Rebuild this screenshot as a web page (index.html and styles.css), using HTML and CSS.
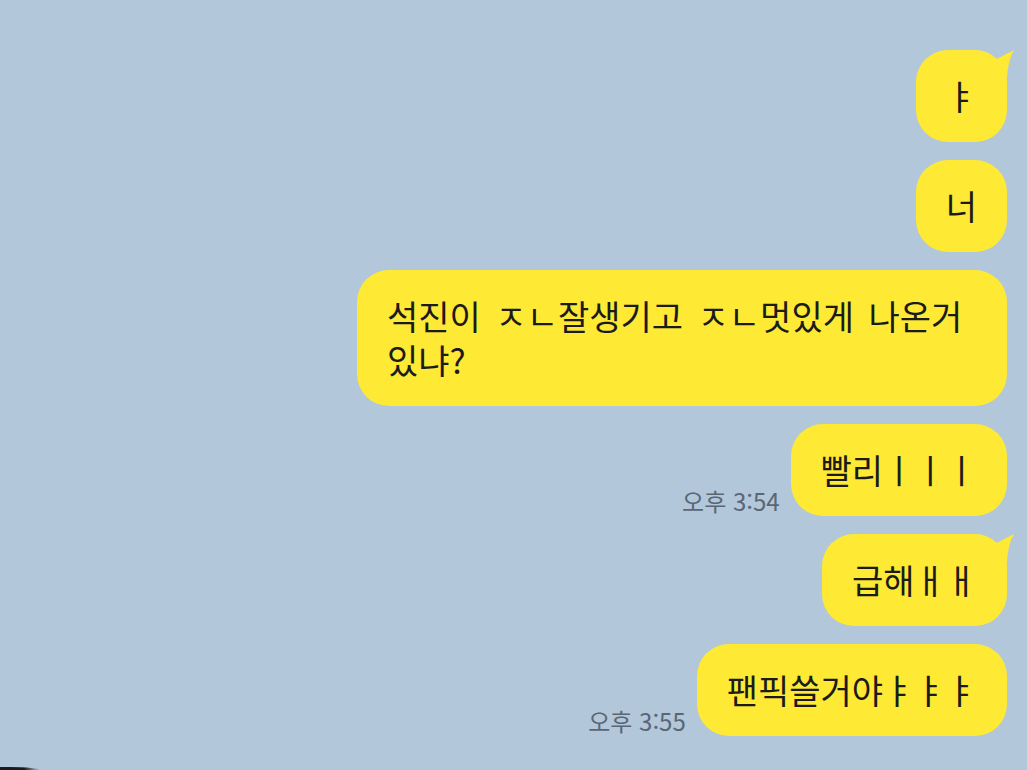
FILE: index.html
```html
<!DOCTYPE html>
<html lang="ko">
<head>
  <meta charset="UTF-8">
  <meta name="viewport" content="width=device-width, initial-scale=1.0">
  <title>채팅</title>
  <link rel="stylesheet" href="styles.css">
</head>
<body>
  <div class="chat">
    <div class="row">
      <div class="bubble first">ㅑ
        <svg class="tail" viewBox="0 0 40 30" width="40" height="30"><path d="M18 11 Q29 5 39 0 Q33 10 32 28 L18 28 Z"/></svg>
      </div>
    </div>
    <div class="row">
      <div class="bubble">너</div>
    </div>
    <div class="row">
      <div class="bubble">석진이 ㅈㄴ잘생기고 ㅈㄴ멋있게 나온거 있냐?</div>
    </div>
    <div class="row">
      <span class="time">오후 3:54</span>
      <div class="bubble">빨리ㅣㅣㅣ</div>
    </div>
    <div class="row">
      <div class="bubble first">급해ㅐㅐ
        <svg class="tail" viewBox="0 0 40 30" width="40" height="30"><path d="M18 11 Q29 5 39 0 Q33 10 32 28 L18 28 Z"/></svg>
      </div>
    </div>
    <div class="row">
      <span class="time">오후 3:55</span>
      <div class="bubble">팬픽쓸거야ㅑㅑㅑ</div>
    </div>
  </div>
  <div class="corner-btn"></div>
</body>
</html>
```

FILE: styles.css
```css
/* General */
body {
  position: relative;
  margin: 0;
  height: 100vh;
  background: #b2c7da;
  font-family: "Noto Sans CJK KR", "Noto Sans", sans-serif;
  overflow: hidden;
}

/* Chat column */
.chat {
  display: flex;
  flex-direction: column;
  align-items: flex-end;
  gap: 18px;
  padding: 50px 20px 0 0;
}

.row {
  display: flex;
  align-items: flex-end;
  gap: 11px;
}

/* Bubbles */
.bubble {
  position: relative;
  max-width: 590px;
  padding: 24px 30px;
  background: #fee935;
  border-radius: 32px;
  color: #1b1b1b;
  font-size: 34px;
  line-height: 44px;
  word-spacing: 5px;
  word-break: keep-all;
}

.tail {
  position: absolute;
  top: 0;
  right: -8px;
  fill: #fee935;
}

/* Timestamps */
.time {
  font-size: 24px;
  color: #5a6674;
  line-height: 28px;
  padding-bottom: 1px;
  white-space: nowrap;
}

/* Floating button edge at bottom-left */
.corner-btn {
  position: absolute;
  left: 0;
  bottom: 0;
  width: 40px;
  height: 3px;
  border-top-right-radius: 30px 3px;
  background: linear-gradient(to right, #1c1c1c 60%, rgba(28, 28, 28, 0));
}
```
